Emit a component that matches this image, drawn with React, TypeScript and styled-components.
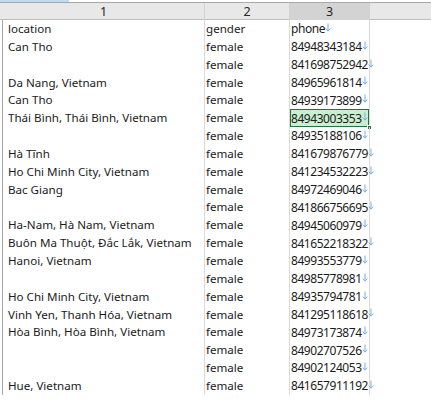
import React from 'react'
import styled, { createGlobalStyle } from 'styled-components'

const GlobalStyle = createGlobalStyle`
  html, body {
    margin: 0;
    padding: 0;
    background: #ffffff;
  }
  body {
    font-family: "Noto Sans", "Open Sans", sans-serif;
    color: #1b1b1b;
  }
`

interface RowData {
  location: string
  gender: string
  phone: string
}

const rows: RowData[] = [
  { location: 'location', gender: 'gender', phone: 'phone' },
  { location: 'Can Tho', gender: 'female', phone: '84948343184' },
  { location: '', gender: 'female', phone: '841698752942' },
  { location: 'Da Nang, Vietnam', gender: 'female', phone: '84965961814' },
  { location: 'Can Tho', gender: 'female', phone: '84939173899' },
  { location: 'Thái Bình, Thái Bình, Vietnam', gender: 'female', phone: '84943003353' },
  { location: '', gender: 'female', phone: '84935188106' },
  { location: 'Hà Tĩnh', gender: 'female', phone: '841679876779' },
  { location: 'Ho Chi Minh City, Vietnam', gender: 'female', phone: '841234532223' },
  { location: 'Bac Giang', gender: 'female', phone: '84972469046' },
  { location: '', gender: 'female', phone: '841866756695' },
  { location: 'Ha-Nam, Hà Nam, Vietnam', gender: 'female', phone: '84945060979' },
  { location: 'Buôn Ma Thuột, Đắc Lắk, Vietnam', gender: 'female', phone: '841652218322' },
  { location: 'Hanoi, Vietnam', gender: 'female', phone: '84993553779' },
  { location: '', gender: 'female', phone: '84985778981' },
  { location: 'Ho Chi Minh City, Vietnam', gender: 'female', phone: '84935794781' },
  { location: 'Vinh Yen, Thanh Hóa, Vietnam', gender: 'female', phone: '841295118618' },
  { location: 'Hòa Bình, Hòa Bình, Vietnam', gender: 'female', phone: '84973173874' },
  { location: '', gender: 'female', phone: '84902707526' },
  { location: '', gender: 'female', phone: '84902124053' },
  { location: 'Hue, Vietnam', gender: 'female', phone: '841657911192' },
]

const SELECTED_ROW = 5

// small "text direction" arrow shown after each phone value
const DownArrow: React.FC = () => (
  <ArrowIcon width="6" height="9" viewBox="0 0 6 9">
    <path d="M3 0.5 V8" stroke="#7aaee6" strokeWidth="1" fill="none" />
    <path d="M0.8 5.6 L3 8.2 L5.2 5.6" stroke="#7aaee6" strokeWidth="1" fill="none" />
  </ArrowIcon>
)

const App: React.FC = () => {
  return <React.Fragment>
    <GlobalStyle />
    <Sheet>
      <TabStrip>
        <ActiveTab />
      </TabStrip>
      <HeaderRow>
        <HeaderCell>1</HeaderCell>
        <HeaderCell>2</HeaderCell>
        <HeaderCell active>3</HeaderCell>
        <HeaderFiller />
      </HeaderRow>
      <Body>
        {rows.map((r, i) => (
          <Row key={i}>
            <LocationCell>{r.location}</LocationCell>
            <Cell>{r.gender}</Cell>
            <PhoneCell selected={i === SELECTED_ROW}>
              <Digits>{r.phone}</Digits>
              <DownArrow />
              {i === SELECTED_ROW && <FillHandle />}
            </PhoneCell>
            <Filler />
          </Row>
        ))}
      </Body>
    </Sheet>
  </React.Fragment>
}

const COLS = '202px 85px 80px 1fr'

const Sheet = styled.div`
  width: 431px;
  height: 400px;
  overflow: hidden;
  display: flex;
  flex-direction: column;
`

const TabStrip = styled.div`
  height: 2px;
  border-bottom: 1px solid #a9a9a9;
  display: flex;
`

const ActiveTab = styled.div`
  width: 69px;
  background: #c3d9ee;
`

const HeaderRow = styled.div`
  display: grid;
  grid-template-columns: ${COLS};
  height: 16px;
  border-bottom: 1px solid #bdbdbd;
  background: #e8e8e8;
  padding-left: 3px;
`

const HeaderCell = styled.div<{ active?: boolean }>`
  display: flex;
  align-items: center;
  justify-content: center;
  font-size: 12.5px;
  border-right: 1px solid #d2d2d2;
  background: ${p => (p.active ? '#d3d3d3' : 'transparent')};
  color: #262626;
`

const HeaderFiller = styled.div``

const Body = styled.div`
  display: flex;
  flex-direction: column;
  margin-left: 2px;
  border-left: 1px solid #a6a6a6;
`

const Row = styled.div`
  display: grid;
  grid-template-columns: ${COLS};
  height: 17.85px;
  font-size: 11.6px;
  line-height: 17px;
`

const Cell = styled.div`
  padding-left: 1px;
  border-right: 1px solid #dadada;
  white-space: nowrap;
  overflow: hidden;
  position: relative;
`

const LocationCell = styled(Cell)`
  padding-left: 5px;
`

const PhoneCell = styled(Cell)<{ selected?: boolean }>`
  overflow: visible;
  display: flex;
  align-items: center;
  ${p => p.selected && `
    background: #c8efd0;
    box-shadow: inset 0 0 0 1px #217346;
  `}
`

const Digits = styled.span`
  font-size: 12px;
  letter-spacing: -0.45px;
`

const ArrowIcon = styled.svg`
  flex: none;
  margin-left: 0;
  margin-top: -3px;
`

const FillHandle = styled.span`
  position: absolute;
  right: -3px;
  bottom: -3px;
  width: 5px;
  height: 5px;
  background: #217346;
  border: 1px solid #ffffff;
  box-sizing: border-box;
`

const Filler = styled.div``

export default App
